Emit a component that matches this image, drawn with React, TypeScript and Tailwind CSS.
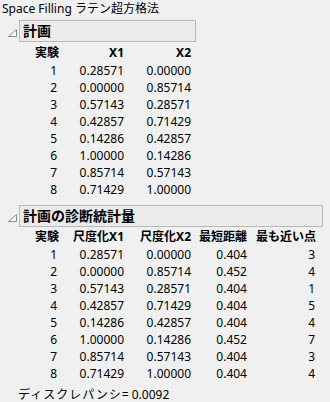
const FONT = "font-['Noto_Sans','Noto_Sans_CJK_JP',sans-serif]";

const DESIGN: [number, string, string][] = [
  [1, "0.28571", "0.00000"],
  [2, "0.00000", "0.85714"],
  [3, "0.57143", "0.28571"],
  [4, "0.42857", "0.71429"],
  [5, "0.14286", "0.42857"],
  [6, "1.00000", "0.14286"],
  [7, "0.85714", "0.57143"],
  [8, "0.71429", "1.00000"],
];

const DIAG: [number, string, string, string, number][] = [
  [1, "0.28571", "0.00000", "0.404", 3],
  [2, "0.00000", "0.85714", "0.452", 4],
  [3, "0.57143", "0.28571", "0.404", 1],
  [4, "0.42857", "0.71429", "0.404", 5],
  [5, "0.14286", "0.42857", "0.404", 4],
  [6, "1.00000", "0.14286", "0.452", 7],
  [7, "0.85714", "0.57143", "0.404", 3],
  [8, "0.71429", "1.00000", "0.404", 4],
];

function Disclosure() {
  return (
    <svg width="9" height="8" viewBox="0 0 9 8" className="shrink-0">
      <path d="M0.5 7.5 L8.5 7.5 L8.5 0.5 Z" fill="#f8f8f8" stroke="#8a8a8a" strokeWidth="1" />
    </svg>
  );
}

function SectionHeader({ title, width }: { title: string; width: string }) {
  return (
    <div className="flex h-[22px] items-center">
      <div className="flex w-[19px] justify-end pr-[2px] pt-[3px]">
        <Disclosure />
      </div>
      <div
        className={`flex h-[22px] items-center border border-[#b9b9b9] bg-[#ebebeb] pl-[3px] text-[14px] font-bold leading-none text-black ${width}`}
      >
        {title}
      </div>
    </div>
  );
}

export default function App() {
  return (
    <div className={`h-[402px] w-[330px] overflow-hidden bg-[#f0f0f0] text-[12px] text-black ${FONT}`}>
      <div className="h-[20px] pl-[2px] pt-[1px] leading-[15px]">Space Filling ラテン超方格法</div>

      <SectionHeader title="計画" width="w-[177px]" />
      <div className="mt-[1px]">
        <div className="flex h-[19px] items-center font-bold">
          <div className="w-[59px] text-right">実験</div>
          <div className="w-[65px] text-right">X1</div>
          <div className="w-[67px] text-right">X2</div>
        </div>
        {DESIGN.map(([n, a, b]) => (
          <div key={n} className="flex h-[17px] items-center">
            <div className="w-[59px] pr-[2px] text-right">{n}</div>
            <div className="w-[65px] text-right">{a}</div>
            <div className="w-[67px] text-right">{b}</div>
          </div>
        ))}
      </div>

      <div className="mt-[7px]">
        <SectionHeader title="計画の診断統計量" width="w-[304px]" />
      </div>
      <div>
        <div className="flex h-[19px] items-center font-bold">
          <div className="w-[59px] text-right">実験</div>
          <div className="w-[65px] text-right">尺度化X1</div>
          <div className="w-[67px] text-right">尺度化X2</div>
          <div className="w-[56px] text-right">最短距離</div>
          <div className="w-[69px] text-right">最も近い点</div>
        </div>
        {DIAG.map(([n, a, b, d, p]) => (
          <div key={n} className="flex h-[17px] items-center">
            <div className="w-[59px] pr-[2px] text-right">{n}</div>
            <div className="w-[65px] text-right">{a}</div>
            <div className="w-[67px] text-right">{b}</div>
            <div className="w-[56px] text-right">{d}</div>
            <div className="w-[69px] pr-[1px] text-right">{p}</div>
          </div>
        ))}
      </div>

      <div className="mt-[4px] flex h-[17px] items-center pl-[18px]">
        <span className="tracking-[1px]">ディスクレパンシ</span>= 0.0092
      </div>
    </div>
  );
}
